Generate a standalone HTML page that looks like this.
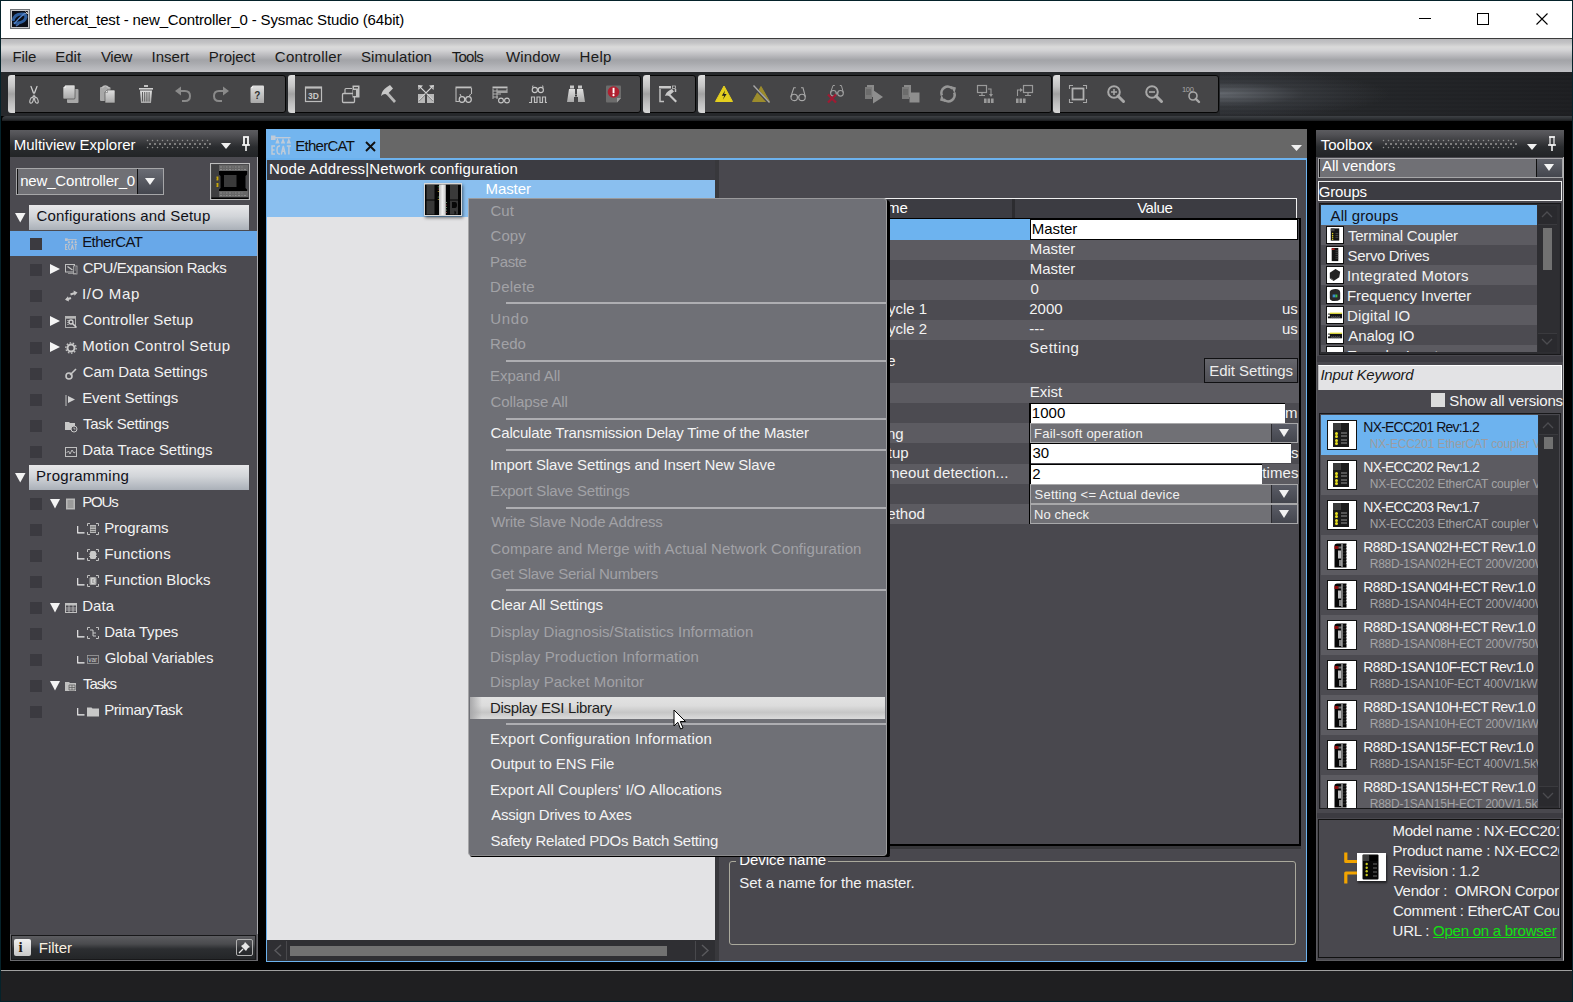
<!DOCTYPE html>
<html><head><meta charset="utf-8">
<style>
*{margin:0;padding:0;box-sizing:border-box}
html,body{width:1573px;height:1002px;overflow:hidden;background:#000;font-family:"Liberation Sans",sans-serif;font-size:15px;color:#f0f0f0;position:relative}
.a{position:absolute}
svg.a{overflow:visible}
.t{position:absolute;white-space:nowrap;line-height:15px}
</style></head><body>
<div class="a" style="left:0px;top:0px;width:1573px;height:1002px;border:1px solid #05222a"></div>
<div class="a" style="left:1px;top:1px;width:1571px;height:37px;background:#fff"></div>
<div class="a" style="left:1px;top:38px;width:1571px;height:1px;background:#3c3c3c"></div>
<svg class="a" style="left:10px;top:9px;" width="20" height="20" viewBox="0 0 20 20"><rect x="0.5" y="0.5" width="19" height="19" fill="#c4c6ca" stroke="#707478"/><rect x="2" y="2" width="16" height="16" fill="#0a0e18"/><path d="M3 12 Q4 5 12 5 Q16 5 16 8 Q15 13 8 14 Q5 14.5 4.5 13" stroke="#2d5d9c" stroke-width="3" fill="none"/><path d="M4 15 Q8 10 15 4" stroke="#5a8ad0" stroke-width="1.2" fill="none"/><path d="M6 17 L9 15" stroke="#4a70b0" stroke-width="1.5"/><path d="M15.5 2.5 L18 5 M18 2.5 L15.5 5" stroke="#e0e0e0" stroke-width="0.9"/></svg>
<div class="t" style="left:34.96px;top:12.10px;color:#000;font-size:15px;letter-spacing:-0.151px;">ethercat_test - new_Controller_0 - Sysmac Studio (64bit)</div>
<div class="a" style="left:1419px;top:18px;width:12px;height:1px;background:#000"></div>
<div class="a" style="left:1477px;top:13px;width:12px;height:12px;border:1px solid #000"></div>
<svg class="a" style="left:1536px;top:13px;" width="12" height="12" viewBox="0 0 12 12"><path d="M0.5 0.5L11.5 11.5M11.5 0.5L0.5 11.5" stroke="#000" stroke-width="1.1"/></svg>
<div class="a" style="left:1px;top:39px;width:1571px;height:33px;background:linear-gradient(#b8b8bb 0px,#c4c4c6 4px,#dadada 8px,#d4d4d6 11px,#bcbcbf 16px,#a3a4a8 21px,#a8a9ad 24px,#b4b5b9 28px,#c0c0c4 33px)"></div>
<div class="t" style="left:12.57px;top:49.10px;color:#1a1a1a;font-size:15px;letter-spacing:-0.158px;">File</div>
<div class="t" style="left:55.27px;top:49.10px;color:#1a1a1a;font-size:15px;letter-spacing:-0.002px;">Edit</div>
<div class="t" style="left:100.93px;top:49.10px;color:#1a1a1a;font-size:15px;letter-spacing:-0.294px;">View</div>
<div class="t" style="left:151.62px;top:49.10px;color:#1a1a1a;font-size:15px;letter-spacing:-0.004px;">Insert</div>
<div class="t" style="left:208.77px;top:49.10px;color:#1a1a1a;font-size:15px;letter-spacing:-0.057px;">Project</div>
<div class="t" style="left:274.84px;top:49.10px;color:#1a1a1a;font-size:15px;letter-spacing:0.221px;">Controller</div>
<div class="t" style="left:360.92px;top:49.10px;color:#1a1a1a;font-size:15px;letter-spacing:0.113px;">Simulation</div>
<div class="t" style="left:451.66px;top:49.10px;color:#1a1a1a;font-size:15px;letter-spacing:-0.700px;">Tools</div>
<div class="t" style="left:505.93px;top:49.10px;color:#1a1a1a;font-size:15px;letter-spacing:0.136px;">Window</div>
<div class="t" style="left:579.47px;top:49.10px;color:#1a1a1a;font-size:15px;letter-spacing:0.370px;">Help</div>
<div class="a" style="left:1px;top:72px;width:1571px;height:44px;background:#26282b"></div>
<div class="a" style="left:1220px;top:72px;width:352px;height:44px;background:repeating-linear-gradient(rgba(0,0,0,0) 0px,rgba(0,0,0,0) 2px,rgba(0,0,0,0.12) 3px,rgba(0,0,0,0) 4px),radial-gradient(ellipse 170px 24px at 0px 22px,rgba(120,125,132,0.75),rgba(80,84,90,0.35) 50%,rgba(0,0,0,0) 100%),linear-gradient(90deg,#2a2c30 0px,#25272a 150px,#1f2023 352px)"></div>
<div class="a" style="left:8px;top:75px;width:278px;height:38px;background:#454547;border:1px solid #060606;border-radius:3px"></div>
<div class="a" style="left:8px;top:75px;width:7px;height:38px;border-radius:3px 0 0 3px;background:linear-gradient(#dedede,#c4c4c4 30%,#a2a2a2 50%,#c0c0c0 75%,#d6d6d6)"></div>
<div class="a" style="left:288px;top:75px;width:353px;height:38px;background:#454547;border:1px solid #060606;border-radius:3px"></div>
<div class="a" style="left:288px;top:75px;width:7px;height:38px;border-radius:3px 0 0 3px;background:linear-gradient(#dedede,#c4c4c4 30%,#a2a2a2 50%,#c0c0c0 75%,#d6d6d6)"></div>
<div class="a" style="left:643px;top:75px;width:53px;height:38px;background:#454547;border:1px solid #060606;border-radius:3px"></div>
<div class="a" style="left:643px;top:75px;width:7px;height:38px;border-radius:3px 0 0 3px;background:linear-gradient(#dedede,#c4c4c4 30%,#a2a2a2 50%,#c0c0c0 75%,#d6d6d6)"></div>
<div class="a" style="left:698px;top:75px;width:354px;height:38px;background:#454547;border:1px solid #060606;border-radius:3px"></div>
<div class="a" style="left:698px;top:75px;width:7px;height:38px;border-radius:3px 0 0 3px;background:linear-gradient(#dedede,#c4c4c4 30%,#a2a2a2 50%,#c0c0c0 75%,#d6d6d6)"></div>
<div class="a" style="left:1053px;top:75px;width:166px;height:38px;background:#454547;border:1px solid #060606;border-radius:3px"></div>
<div class="a" style="left:1053px;top:75px;width:7px;height:38px;border-radius:3px 0 0 3px;background:linear-gradient(#dedede,#c4c4c4 30%,#a2a2a2 50%,#c0c0c0 75%,#d6d6d6)"></div>
<div class="a" style="left:2px;top:116px;width:1570px;height:5px;background:linear-gradient(#3e4145,#2c2f32 60%,#1a1b1d);border-radius:4px 0 0 0"></div>
<svg width="0" height="0" style="position:absolute"><defs><linearGradient id="lg" x1="0" y1="0" x2="0" y2="1"><stop offset="0" stop-color="#e0e0e0"/><stop offset="1" stop-color="#a8a8a8"/></linearGradient></defs></svg>
<svg class="a" style="left:24px;top:84px;" width="20" height="20" viewBox="0 0 20 20"><path d="M6.3 2.2 Q6.9 1.2 7.6 2.2 L11.8 13.2 L10.4 13.6 Z M13.7 2.2 Q13.1 1.2 12.4 2.2 L8.2 13.2 L9.6 13.6 Z" fill="#cfcfcf"/><ellipse cx="7.6" cy="16.3" rx="1.6" ry="3" transform="rotate(18 7.6 16.3)" fill="none" stroke="#c4c4c4" stroke-width="1.1"/><ellipse cx="12.4" cy="16.3" rx="1.6" ry="3" transform="rotate(-18 12.4 16.3)" fill="none" stroke="#c4c4c4" stroke-width="1.1"/></svg>
<svg class="a" style="left:61px;top:84px;" width="20" height="20" viewBox="0 0 20 20"><rect x="6" y="5" width="11.5" height="14" rx="1" fill="#a8a8a8"/><path d="M3 3 L5 1 L13 1 Q14 1 14 2 L14 14 Q14 15 13 15 L3 15 Q2 15 2 14 L2 4 Z" fill="url(#lg)" stroke="#404040" stroke-width="0.6"/><path d="M2 4 L5 4 L5 1" fill="#e8e8e8"/></svg>
<svg class="a" style="left:98px;top:84px;" width="20" height="20" viewBox="0 0 20 20"><rect x="2" y="3" width="10.5" height="14" rx="1" fill="#a8a8a8"/><path d="M4 4 Q7 0 11 4" stroke="#c0c0c0" stroke-width="1.6" fill="none"/><path d="M7 8 L9 6 L16 6 Q17 6 17 7 L17 19 L7 19 Z" fill="url(#lg)" stroke="#404040" stroke-width="0.6"/><path d="M7 8.5 L9.5 8.5 L9.5 6" fill="#e8e8e8" stroke="#606060" stroke-width="0.5"/></svg>
<svg class="a" style="left:136px;top:84px;" width="20" height="20" viewBox="0 0 20 20"><rect x="8" y="1" width="4" height="2" fill="#c0c0c0"/><rect x="3" y="4" width="14" height="1.6" fill="#d0d0d0"/><path d="M4 6.5 L16 6.5 L15 19 L5 19 Z" fill="url(#lg)"/><path d="M6.5 8 V17.5 M8.7 8 V17.5 M10.9 8 V17.5 M13.1 8 V17.5" stroke="#505050" stroke-width="0.9"/></svg>
<svg class="a" style="left:174px;top:84px;" width="20" height="20" viewBox="0 0 20 20"><path d="M6 7 H11 Q16 7 16 12 Q16 17 11 17 H8" stroke="#8a8a8a" stroke-width="2" fill="none"/><path d="M1 7 L7 2.5 L7 11.5 Z" fill="#8a8a8a"/></svg>
<svg class="a" style="left:210px;top:84px;" width="20" height="20" viewBox="0 0 20 20"><path d="M14 7 H9 Q4 7 4 12 Q4 17 9 17 H12" stroke="#8a8a8a" stroke-width="2" fill="none"/><path d="M19 7 L13 2.5 L13 11.5 Z" fill="#8a8a8a"/></svg>
<svg class="a" style="left:248px;top:84px;" width="20" height="20" viewBox="0 0 20 20"><path d="M2.5 4 L5 1.5 L15 1.5 Q16 1.5 16 2.5 L16 18.5 Q16 19 15 19 L3.5 19 Q2.5 19 2.5 18 Z" fill="url(#lg)"/><path d="M2.5 4 L5 4 L5 1.5 Z" fill="#f0f0f0"/><text x="9.3" y="14.5" font-family="Liberation Sans" font-weight="bold" font-size="10" fill="#303030" text-anchor="middle">?</text></svg>
<svg class="a" style="left:304px;top:84px;" width="20" height="20" viewBox="0 0 20 20"><rect x="1.5" y="3" width="16" height="14.5" fill="none" stroke="#bdbdbd" stroke-width="1.2"/><rect x="1.5" y="3" width="16" height="1.6" fill="#bdbdbd"/><text x="9.5" y="14.6" font-family="Liberation Sans" font-weight="bold" font-size="8.5" fill="#c8c8c8" text-anchor="middle">3D</text></svg>
<svg class="a" style="left:341px;top:84px;" width="20" height="20" viewBox="0 0 20 20"><rect x="1.5" y="9.5" width="12" height="9" rx="1" fill="none" stroke="#bdbdbd" stroke-width="1.3"/><path d="M4 9 V5.5 Q4 4.5 5 4.5 H11" stroke="#bdbdbd" stroke-width="1.2" fill="none"/><rect x="11.5" y="1.5" width="7" height="12" fill="#c0c0c0"/><rect x="13" y="3" width="4" height="1.5" fill="#505050"/><rect x="12" y="6" width="3" height="6" fill="#505050"/></svg>
<svg class="a" style="left:378px;top:84px;" width="20" height="20" viewBox="0 0 20 20"><path d="M10 8 L18 17 L16 19 L8 10 Z" fill="#b8b8b8"/><path d="M3 12 Q4 6 9 3 L12 1 L15 4.5 L9 10.5 Q6 9 3 12 Z" fill="#c8c8c8"/></svg>
<svg class="a" style="left:416px;top:84px;" width="20" height="20" viewBox="0 0 20 20"><rect x="2" y="10" width="7" height="9" fill="#b8b8b8"/><rect x="11" y="10" width="7" height="9" fill="#b8b8b8"/><path d="M3 2 L17 16 M17 2 L3 16" stroke="#d0d0d0" stroke-width="1.3"/><path d="M2 1 L7 1.5 L2.5 6 Z M18 1 L13 1.5 L17.5 6 Z" fill="#d0d0d0"/><path d="M3 2 L17 16 M17 2 L3 16" stroke="#454547" stroke-width="0.5" transform="translate(0,1.2)"/></svg>
<svg class="a" style="left:454px;top:84px;" width="20" height="20" viewBox="0 0 20 20"><rect x="1.5" y="2.5" width="16" height="1.8" fill="#c0c0c0"/><path d="M2 4 V17.5 H5" stroke="#b8b8b8" stroke-width="1.1" fill="none"/><path d="M17.5 4 V10" stroke="#b8b8b8" stroke-width="1.1"/><circle cx="8" cy="15.5" r="2.8" fill="none" stroke="#c8c8c8" stroke-width="1.2"/><circle cx="14.5" cy="15.5" r="2.8" fill="none" stroke="#c8c8c8" stroke-width="1.2"/><path d="M6 10 L7 12 M16.5 10 L15.5 12 M10.6 15 Q11.3 14 12 15" stroke="#c8c8c8" stroke-width="1" fill="none"/></svg>
<svg class="a" style="left:491px;top:84px;" width="20" height="20" viewBox="0 0 20 20"><rect x="1.5" y="2.5" width="15" height="1.8" fill="#c0c0c0"/><path d="M2 4.5 V15 M2 7 H16 M2 10 H10 M2 13 H7 M6 4.5 V15 M16 4.5 V9" stroke="#b0b0b0" stroke-width="1" fill="none"/><rect x="6" y="7" width="10" height="2" fill="#a0a0a0"/><circle cx="10" cy="16.5" r="2.4" fill="none" stroke="#c8c8c8" stroke-width="1.1"/><circle cx="16" cy="16.5" r="2.4" fill="none" stroke="#c8c8c8" stroke-width="1.1"/></svg>
<svg class="a" style="left:528px;top:84px;" width="20" height="20" viewBox="0 0 20 20"><circle cx="6.8" cy="6" r="2.6" fill="none" stroke="#c8c8c8" stroke-width="1.1"/><circle cx="12.8" cy="6" r="2.6" fill="none" stroke="#c8c8c8" stroke-width="1.1"/><path d="M5 1.5 L4.5 3.5 M14.6 1.5 L15.1 3.5 M9.2 5.5 Q9.8 4.5 10.4 5.5" stroke="#c8c8c8" stroke-width="1" fill="none"/><path d="M1 18.5 H3.5 V13 H6.5 V18.5 H9 V13 H12 V18.5 H14.5 V13 H17.5 V18.5 H19" stroke="#c0c0c0" stroke-width="1.2" fill="none"/></svg>
<svg class="a" style="left:566px;top:84px;" width="20" height="20" viewBox="0 0 20 20"><rect x="4" y="1.5" width="4" height="3" fill="#c8c8c8"/><rect x="12" y="1.5" width="4" height="3" fill="#c8c8c8"/><path d="M3 5 H9 V10 H11 V5 H17 L19 18 H12 V13 H8 V18 H1 Z" fill="url(#lg)"/><rect x="9" y="10.5" width="2" height="2" fill="#3a3a3a"/></svg>
<svg class="a" style="left:604px;top:84px;" width="20" height="20" viewBox="0 0 20 20"><path d="M2 2.5 Q2 1.5 3 1.5 H16 Q17 1.5 17 2.5 V14 L13 18.5 H3 Q2 18.5 2 17.5 Z" fill="#6c6c6c"/><path d="M17 14 L13 18.5 L13 14 Z" fill="#a0a0a0"/><circle cx="9.5" cy="8" r="5.8" fill="#b02030"/><rect x="8.6" y="3.8" width="1.9" height="5.5" fill="#fff"/><circle cx="9.5" cy="11.2" r="1.1" fill="#fff"/></svg>
<svg class="a" style="left:658px;top:84px;" width="20" height="20" viewBox="0 0 20 20"><rect x="1" y="2" width="12" height="2.5" fill="#c8c8c8"/><rect x="14.5" y="2" width="3" height="2.5" fill="none" stroke="#c0c0c0" stroke-width="0.8"/><path d="M2 5 V17.5 H6 M17.5 5 V8" stroke="#c0c0c0" stroke-width="1.5" fill="none"/><path d="M7 12 Q8 8 12 6 L14 5 L16 7.5 L12.5 10.5 L19 17 L17.5 18.5 L11 12 Q9 11 7 12 Z" fill="#c8c8c8"/></svg>
<svg class="a" style="left:714px;top:84px;" width="20" height="20" viewBox="0 0 20 20"><path d="M10 2 L18.5 17.5 H1.5 Z" fill="#e4cf1e" stroke="#e4cf1e" stroke-width="1" stroke-linejoin="round"/><path d="M11 6.5 L7.8 11.8 H10.3 L8.8 15.8 L12.6 10 H10.2 Z" fill="#202020"/></svg>
<svg class="a" style="left:751px;top:84px;" width="20" height="20" viewBox="0 0 20 20"><path d="M10 2.5 L18.5 17.5 H1.5 Z" fill="#9c8c2c" stroke="#9c8c2c" stroke-width="1" stroke-linejoin="round"/><path d="M2 2 L18 19" stroke="#454547" stroke-width="2.6"/><path d="M2.5 1.5 L18.5 18.5" stroke="#a8a8a8" stroke-width="1.4"/></svg>
<svg class="a" style="left:788px;top:84px;" width="20" height="20" viewBox="0 0 20 20"><circle cx="6.2" cy="13.4" r="3.2" fill="none" stroke="#a8a8a8" stroke-width="1.15"/><circle cx="14" cy="13.4" r="3.2" fill="none" stroke="#a8a8a8" stroke-width="1.15"/><path d="M2.8 12.8 L5.8 3.8 H7.8 M17.4 12.8 L15 3.8 H13 M9.4 13 H10.8" stroke="#a8a8a8" stroke-width="1.1" fill="none"/></svg>
<svg class="a" style="left:826px;top:84px;" width="20" height="20" viewBox="0 0 20 20"><circle cx="7.4" cy="9.3" r="2.8" fill="none" stroke="#a0a0a0" stroke-width="1.1"/><circle cx="14.5" cy="9.3" r="2.8" fill="none" stroke="#a0a0a0" stroke-width="1.1"/><path d="M4.5 8.8 L7 1.5 H8.8 M17.4 8.8 L15.4 1.5 H13.8 M10.2 9 H11.7" stroke="#a0a0a0" stroke-width="1" fill="none"/><path d="M2 10.5 L10 18.5 M10 10.5 L2 18.5" stroke="#a01a32" stroke-width="2.3"/></svg>
<svg class="a" style="left:864px;top:84px;" width="20" height="20" viewBox="0 0 20 20"><rect x="3" y="1" width="7" height="12" fill="#8a8a8a"/><rect x="1" y="3" width="7" height="12" fill="#7a7a7a"/><path d="M2 6 H7 M2 8 H7 M2 10 H7" stroke="#555" stroke-width="0.7"/><path d="M9 6 L19 13 L9 19.5 Z" fill="#8e8e8e"/></svg>
<svg class="a" style="left:901px;top:84px;" width="20" height="20" viewBox="0 0 20 20"><rect x="3" y="1" width="7" height="12" fill="#8a8a8a"/><rect x="1" y="3" width="7" height="12" fill="#7a7a7a"/><path d="M2 6 H7 M2 8 H7 M2 10 H7" stroke="#555" stroke-width="0.7"/><rect x="8.5" y="8.5" width="10" height="10" fill="#8e8e8e"/></svg>
<svg class="a" style="left:938px;top:84px;" width="20" height="20" viewBox="0 0 20 20"><path d="M3.8 11.5 A6.5 6.5 0 0 1 14.5 4.6" stroke="#969696" stroke-width="2.6" fill="none"/><path d="M16.2 8.5 A6.5 6.5 0 0 1 5.5 15.4" stroke="#969696" stroke-width="2.6" fill="none"/><path d="M12.5 2 L18 3.5 L16.5 9 Z M7.5 18 L2 16.5 L3.5 11 Z" fill="#969696"/></svg>
<svg class="a" style="left:976px;top:84px;" width="20" height="20" viewBox="0 0 20 20"><rect x="1.5" y="1.5" width="9" height="7" fill="none" stroke="#9a9a9a" stroke-width="1.2"/><path d="M6 9 V11 M3 11.5 H9" stroke="#9a9a9a" stroke-width="1.2"/><path d="M12 5 H15 V11" stroke="#9a9a9a" stroke-width="1.1" fill="none"/><path d="M13 10 L15 13 L17 10 Z" fill="#9a9a9a"/><rect x="8" y="14.5" width="2.6" height="4.5" fill="#9a9a9a"/><rect x="11.5" y="14.5" width="2.6" height="4.5" fill="#9a9a9a"/><rect x="15" y="14.5" width="2.6" height="4.5" fill="#9a9a9a"/></svg>
<svg class="a" style="left:1014px;top:84px;" width="20" height="20" viewBox="0 0 20 20"><rect x="9.5" y="1.5" width="9" height="7" fill="none" stroke="#9a9a9a" stroke-width="1.2"/><path d="M14 9 V11 M11 11.5 H17" stroke="#9a9a9a" stroke-width="1.2"/><path d="M3.5 12 V6 H7" stroke="#9a9a9a" stroke-width="1.1" fill="none"/><path d="M6 4 L9 6 L6 8 Z" fill="#9a9a9a"/><rect x="2" y="14.5" width="2.6" height="4.5" fill="#9a9a9a"/><rect x="5.5" y="14.5" width="2.6" height="4.5" fill="#9a9a9a"/><rect x="9" y="14.5" width="2.6" height="4.5" fill="#9a9a9a"/></svg>
<svg class="a" style="left:1068px;top:84px;" width="20" height="20" viewBox="0 0 20 20"><path d="M1.5 5 V1.5 H5 M15 1.5 H18.5 V5 M18.5 15 V18.5 H15 M5 18.5 H1.5 V15" stroke="#a8a8a8" stroke-width="1.1" fill="none"/><rect x="4.5" y="4.5" width="11" height="11" fill="none" stroke="#b0b0b0" stroke-width="1.8"/></svg>
<svg class="a" style="left:1106px;top:84px;" width="20" height="20" viewBox="0 0 20 20"><circle cx="8" cy="8" r="5.8" fill="none" stroke="#a8a8a8" stroke-width="2"/><path d="M12 12 L17.5 17.5" stroke="#a8a8a8" stroke-width="3" stroke-linecap="round"/><path d="M5 8 H11 M8 5 V11" stroke="#a8a8a8" stroke-width="1.5"/></svg>
<svg class="a" style="left:1144px;top:84px;" width="20" height="20" viewBox="0 0 20 20"><circle cx="8" cy="8" r="5.8" fill="none" stroke="#a8a8a8" stroke-width="2"/><path d="M12 12 L17.5 17.5" stroke="#a8a8a8" stroke-width="3" stroke-linecap="round"/><path d="M5 8 H11" stroke="#a8a8a8" stroke-width="1.6"/></svg>
<svg class="a" style="left:1181px;top:84px;" width="20" height="20" viewBox="0 0 20 20"><text x="1" y="7.5" font-family="Liberation Sans" font-size="7.5" fill="#a8a8a8" letter-spacing="-0.3">100</text><circle cx="12" cy="12" r="4" fill="none" stroke="#a8a8a8" stroke-width="1.6"/><path d="M14.8 14.8 L18 18" stroke="#a8a8a8" stroke-width="2.4" stroke-linecap="round"/></svg>
<div class="a" style="left:10px;top:130px;width:248px;height:27px;background:linear-gradient(#5c5c60 0px,#505054 5px,#3a3b3e 12px,#2a2c2f 17px,#222426 27px)"></div>
<div class="a" style="left:146px;top:139px;width:65px;height:11px;background-image:radial-gradient(circle at 1.5px 1.5px,#8e8e8e 0.75px,transparent 1.05px),radial-gradient(circle at 4px 5px,#7e7e7e 0.75px,transparent 1.05px);background-size:5px 7px"></div>
<div class="t" style="left:13.77px;top:137.00px;color:#ffffff;font-size:15px;">Multiview Explorer</div>
<svg class="a" style="left:221px;top:143px;" width="11" height="7" viewBox="0 0 11 7"><path d="M0 0 H10 L5 6 Z" fill="#f0f0f0"/></svg>
<svg class="a" style="left:240px;top:136px;" width="12" height="16" viewBox="0 0 12 16"><path d="M3 1 H9 M4 1 V9 M8 1 V9 M2 9 H10 M6 9 V15" stroke="#f4f4f4" stroke-width="1.6" fill="none"/><rect x="4" y="1" width="4" height="8" fill="none" stroke="#f4f4f4" stroke-width="1.2"/></svg>
<div class="a" style="left:10px;top:157px;width:248px;height:804px;background:#4b4a50;border-right:1px solid #a8a8ac"></div>
<div class="a" style="left:16px;top:168px;width:148px;height:27px;background:#707075;border:1px solid #a6a6a8"></div>
<div class="a" style="left:17px;top:169px;width:1px;height:25px;background:#111"></div>
<div class="a" style="left:137px;top:169px;width:26px;height:25px;background:linear-gradient(#6a6c74,#44464e);border-left:1px solid #101010"></div>
<svg class="a" style="left:145px;top:178px;" width="10" height="7" viewBox="0 0 10 7"><path d="M0 0 H10 L5 7 Z" fill="#f4f4f4"/></svg>
<div class="t" style="left:20.20px;top:173.30px;color:#ffffff;font-size:15px;letter-spacing:-0.172px;">new_Controller_0</div>
<svg class="a" style="left:210px;top:163px;" width="40" height="37" viewBox="0 0 40 37"><rect x="0.5" y="0.5" width="39" height="36" fill="#4a4a4c" stroke="#bdbdbd" stroke-width="1"/><rect x="1.5" y="1.5" width="8" height="34" fill="#3e3e40"/><rect x="9" y="2" width="29" height="6" fill="#666"/><rect x="9" y="28" width="29" height="6" fill="#666"/><path d="M10 4 h2 M13.5 4 h1 M16 4 h1.5 M19 4 h2 M22.5 4 h1 M25 4 h1.5 M28 4 h2 M31.5 4 h1 M10 6.5 h2 M13.5 6.5 h1 M16 6.5 h1.5 M19 6.5 h2 M22.5 6.5 h1 M25 6.5 h1.5 M28 6.5 h2 M31.5 6.5 h1 M34 6.5 h2" stroke="#8a8a8a" stroke-width="1"/><path d="M10 30 h2 M13.5 30 h1 M16 30 h1.5 M19 30 h2 M22.5 30 h1 M25 30 h1.5 M28 30 h2 M31.5 30 h1 M10 32.5 h2 M13.5 32.5 h1 M16 32.5 h1.5 M19 32.5 h2 M22.5 32.5 h1 M25 32.5 h1.5 M28 32.5 h2 M31.5 32.5 h1 M34 32.5 h2" stroke="#8a8a8a" stroke-width="1"/><path d="M9 8 H37 V11.5 L35.5 13 V25 L37 26.5 V28 H9 V26.5 L10.5 25 V13 L9 11.5 Z" fill="#000"/><rect x="14" y="12" width="12.5" height="12" fill="#3a3a3a"/><rect x="1.5" y="34.5" width="37" height="1.5" fill="#000"/><path d="M6 15.5 L8.5 13.5 V18 Z M6 22 L8.5 20 V24.5 Z" fill="#111"/><rect x="6.5" y="13.5" width="2" height="4" fill="#c8a810"/><rect x="6.5" y="20" width="2" height="4" fill="#c8a810"/></svg>
<div class="a" style="left:29px;top:205px;width:220px;height:25px;background:linear-gradient(#e7e7e9,#d2d5d9 45%,#aab0b8)"></div>
<svg class="a" style="left:15px;top:212.5px;" width="10.5" height="9.5" viewBox="0 0 10.5 9.5"><path d="M0 0 H10.5 L5.25 9.5 Z" fill="#f4f4f4"/></svg>
<div class="t" style="left:36.54px;top:207.90px;color:#101018;font-size:15px;letter-spacing:0.192px;">Configurations and Setup</div>
<div class="a" style="left:10px;top:231px;width:247px;height:25px;background:#68a8e9"></div>
<div class="a" style="left:30px;top:237.5px;width:12px;height:12.0px;background:#3b3a40"></div>
<svg class="a" style="left:65px;top:238px;" width="13" height="13" viewBox="0 0 13 13"><g transform="scale(0.6)"><g fill="#c0c4cc"><rect x="0" y="0.5" width="4.5" height="4.5"/><rect x="4" y="2" width="15.5" height="1.4"/><path d="M4.3 8.6 L6.5 3 L8.7 8.6 Z M9.8 8.6 L12 3 L14.2 8.6 Z M15.6 8.6 L17.8 3 L20 8.6 Z"/></g><path d="M4 11 H1 V19 H4 M1 15 H3.5 M9 11 Q6 10.5 6 15 Q6 19.5 9 19 M10.3 19.5 L12.3 11 L14.3 19.5 M11 16.3 H13.6 M15.8 11 H20 M17.9 11 V19.5" stroke="#c0c4cc" stroke-width="1.7" fill="none"/></g></svg>
<div class="t" style="left:82.17px;top:233.90px;color:#101018;font-size:15px;letter-spacing:-0.554px;">EtherCAT</div>
<div class="a" style="left:30px;top:263.5px;width:12px;height:12.0px;background:#3b3a40"></div>
<svg class="a" style="left:50px;top:264px;" width="10" height="10" viewBox="0 0 10 10"><path d="M0 0 L10 5.0 L0 10 Z" fill="#f4f4f4"/></svg>
<svg class="a" style="left:65px;top:264px;" width="13" height="13" viewBox="0 0 13 13"><rect x="0.5" y="0.5" width="9" height="7.5" fill="none" stroke="#c0c0c0" stroke-width="1"/><path d="M2.5 2.5 L7.5 6" stroke="#c8c8c8" stroke-width="1.2"/><rect x="8.5" y="2" width="3.5" height="8" fill="#4b4a50" stroke="#b0b0b0" stroke-width="0.8"/><path d="M9.5 4 H11 M9.5 6 H11 M3 9.5 H11" stroke="#b0b0b0" stroke-width="0.7"/></svg>
<div class="t" style="left:82.64px;top:259.90px;color:#f2f2f2;font-size:15px;letter-spacing:-0.429px;">CPU/Expansion Racks</div>
<div class="a" style="left:30px;top:289.5px;width:12px;height:12.0px;background:#3b3a40"></div>
<svg class="a" style="left:65px;top:290px;" width="13" height="13" viewBox="0 0 13 13"><path d="M5.5 4.5 L10 3 M1.5 9.5 L6 8" stroke="#c8c8c8" stroke-width="2.2" fill="none"/><path d="M8.5 0.5 L12.5 2.5 L9.5 5.8 Z M3 6.2 L0 9.8 L4 11.5 Z" fill="#c8c8c8"/></svg>
<div class="t" style="left:82.02px;top:285.90px;color:#f2f2f2;font-size:15px;letter-spacing:0.661px;">I/O Map</div>
<div class="a" style="left:30px;top:315.5px;width:12px;height:12.0px;background:#3b3a40"></div>
<svg class="a" style="left:50px;top:316px;" width="10" height="10" viewBox="0 0 10 10"><path d="M0 0 L10 5.0 L0 10 Z" fill="#f4f4f4"/></svg>
<svg class="a" style="left:65px;top:316px;" width="13" height="13" viewBox="0 0 13 13"><rect x="0.5" y="0.5" width="10" height="11" fill="none" stroke="#b8b8b8" stroke-width="0.9"/><rect x="0.5" y="0.5" width="10" height="2.2" fill="#b8b8b8"/><path d="M2 4.5 H5 M2 6.5 H4 M2 8.5 H4" stroke="#a8a8a8" stroke-width="0.8"/><circle cx="6" cy="6" r="2" fill="none" stroke="#d0d0d0" stroke-width="1.3"/><path d="M7.5 7.5 L11.5 11.5" stroke="#d0d0d0" stroke-width="1.6"/></svg>
<div class="t" style="left:82.64px;top:311.90px;color:#f2f2f2;font-size:15px;letter-spacing:0.133px;">Controller Setup</div>
<div class="a" style="left:30px;top:341.5px;width:12px;height:12.0px;background:#3b3a40"></div>
<svg class="a" style="left:50px;top:342px;" width="10" height="10" viewBox="0 0 10 10"><path d="M0 0 L10 5.0 L0 10 Z" fill="#f4f4f4"/></svg>
<svg class="a" style="left:65px;top:342px;" width="13" height="13" viewBox="0 0 13 13"><circle cx="6" cy="6" r="3.5" fill="none" stroke="#c8c8c8" stroke-width="2"/><circle cx="6" cy="6" r="5.2" fill="none" stroke="#c8c8c8" stroke-width="1.2" stroke-dasharray="1.6 1.6"/></svg>
<div class="t" style="left:82.17px;top:337.90px;color:#f2f2f2;font-size:15px;letter-spacing:0.366px;">Motion Control Setup</div>
<div class="a" style="left:30px;top:367.5px;width:12px;height:12.0px;background:#3b3a40"></div>
<svg class="a" style="left:65px;top:368px;" width="13" height="13" viewBox="0 0 13 13"><circle cx="4" cy="8" r="3" fill="none" stroke="#c8c8c8" stroke-width="1.6"/><path d="M5 7 L11 1" stroke="#c8c8c8" stroke-width="1.6"/></svg>
<div class="t" style="left:82.64px;top:363.90px;color:#f2f2f2;font-size:15px;letter-spacing:-0.062px;">Cam Data Settings</div>
<div class="a" style="left:30px;top:393.5px;width:12px;height:12.0px;background:#3b3a40"></div>
<svg class="a" style="left:65px;top:394px;" width="13" height="13" viewBox="0 0 13 13"><path d="M1 1 V12" stroke="#c0c0c0" stroke-width="1"/><path d="M3 2 L10 5.5 L3 9 Z" fill="#d0d0d0"/></svg>
<div class="t" style="left:82.17px;top:389.90px;color:#f2f2f2;font-size:15px;letter-spacing:-0.042px;">Event Settings</div>
<div class="a" style="left:30px;top:419.5px;width:12px;height:12.0px;background:#3b3a40"></div>
<svg class="a" style="left:65px;top:420px;" width="13" height="13" viewBox="0 0 13 13"><path d="M0 2 H4 L5 3 H10 V10 H0 Z" fill="#c8c8c8"/><circle cx="9" cy="9" r="3" fill="#4b4a50" stroke="#c8c8c8" stroke-width="1"/><path d="M9 7.5 V9 H10.5" stroke="#c8c8c8" stroke-width="0.8" fill="none"/></svg>
<div class="t" style="left:83.06px;top:415.90px;color:#f2f2f2;font-size:15px;letter-spacing:-0.274px;">Task Settings</div>
<div class="a" style="left:30px;top:445.5px;width:12px;height:12.0px;background:#3b3a40"></div>
<svg class="a" style="left:65px;top:446px;" width="13" height="13" viewBox="0 0 13 13"><rect x="0.5" y="1.5" width="11" height="9" fill="none" stroke="#c0c0c0"/><path d="M1.5 7 L3.5 5 L5 8 L7 4 L9 7 L10.5 6" stroke="#c8c8c8" stroke-width="0.9" fill="none"/></svg>
<div class="t" style="left:82.17px;top:441.90px;color:#f2f2f2;font-size:15px;letter-spacing:-0.072px;">Data Trace Settings</div>
<div class="a" style="left:29px;top:465px;width:220px;height:25px;background:linear-gradient(#e7e7e9,#d2d5d9 45%,#aab0b8)"></div>
<svg class="a" style="left:15px;top:472.5px;" width="10.5" height="9.5" viewBox="0 0 10.5 9.5"><path d="M0 0 H10.5 L5.25 9.5 Z" fill="#f4f4f4"/></svg>
<div class="t" style="left:36.07px;top:467.90px;color:#101018;font-size:15px;letter-spacing:0.287px;">Programming</div>
<div class="a" style="left:30px;top:497.5px;width:12px;height:12.0px;background:#3b3a40"></div>
<svg class="a" style="left:50px;top:499px;" width="10" height="9.5" viewBox="0 0 10 9.5"><path d="M0 0 H10 L5.0 9.5 Z" fill="#f4f4f4"/></svg>
<svg class="a" style="left:65px;top:498px;" width="13" height="13" viewBox="0 0 13 13"><rect x="1" y="0.5" width="9" height="11" fill="#b8b8b8"/><path d="M2.5 3 H8.5 M2.5 5 H8.5 M2.5 7 H8.5 M2.5 9 H8.5" stroke="#707070" stroke-width="0.8"/></svg>
<div class="t" style="left:82.17px;top:493.90px;color:#f2f2f2;font-size:15px;letter-spacing:-1.177px;">POUs</div>
<div class="a" style="left:30px;top:523.5px;width:12px;height:12.0px;background:#3b3a40"></div>
<svg class="a" style="left:77px;top:526px;" width="8" height="8" viewBox="0 0 8 8"><path d="M0.7 0 V6.9 H7.5" stroke="#f4f4f4" stroke-width="1.1" fill="none"/></svg>
<svg class="a" style="left:87px;top:523px;" width="12" height="12" viewBox="0 0 12 12"><path d="M0.5 3 V0.5 H3 M9 0.5 H11.5 V3 M11.5 9 V11.5 H9 M3 11.5 H0.5 V9" stroke="#c0c0c0" fill="none"/><rect x="3" y="2" width="6" height="8" fill="#b8b8b8"/><path d="M3.5 4 H8.5 M3.5 6.5 H8.5 M3.5 8.5 H8.5" stroke="#5a5a5a" stroke-width="0.8"/></svg>
<div class="t" style="left:104.17px;top:519.90px;color:#f2f2f2;font-size:15px;letter-spacing:-0.092px;">Programs</div>
<div class="a" style="left:30px;top:549.5px;width:12px;height:12.0px;background:#3b3a40"></div>
<svg class="a" style="left:77px;top:552px;" width="8" height="8" viewBox="0 0 8 8"><path d="M0.7 0 V6.9 H7.5" stroke="#f4f4f4" stroke-width="1.1" fill="none"/></svg>
<svg class="a" style="left:87px;top:549px;" width="12" height="12" viewBox="0 0 12 12"><path d="M0.5 3 V0.5 H3 M9 0.5 H11.5 V3 M11.5 9 V11.5 H9 M3 11.5 H0.5 V9" stroke="#c0c0c0" fill="none"/><rect x="3" y="2" width="6" height="8" rx="1.5" fill="#c8c8c8"/><path d="M2 5 H10 M2 7.5 H10" stroke="#c8c8c8" stroke-width="0.9"/></svg>
<div class="t" style="left:104.17px;top:545.90px;color:#f2f2f2;font-size:15px;letter-spacing:0.180px;">Functions</div>
<div class="a" style="left:30px;top:575.5px;width:12px;height:12.0px;background:#3b3a40"></div>
<svg class="a" style="left:77px;top:578px;" width="8" height="8" viewBox="0 0 8 8"><path d="M0.7 0 V6.9 H7.5" stroke="#f4f4f4" stroke-width="1.1" fill="none"/></svg>
<svg class="a" style="left:87px;top:575px;" width="12" height="12" viewBox="0 0 12 12"><path d="M0.5 3 V0.5 H3 M9 0.5 H11.5 V3 M11.5 9 V11.5 H9 M3 11.5 H0.5 V9" stroke="#c0c0c0" fill="none"/><rect x="2.5" y="2" width="7" height="8" rx="1.5" fill="#a8a8a8"/><path d="M4.5 3.5 H6.5 Q8 3.5 8 5 Q8 6 6.5 6 Q8 6 8 7.2 Q8 8.5 6.5 8.5 H4.5 Z" fill="none" stroke="#e0e0e0" stroke-width="0.8"/></svg>
<div class="t" style="left:104.17px;top:571.90px;color:#f2f2f2;font-size:15px;letter-spacing:0.042px;">Function Blocks</div>
<div class="a" style="left:30px;top:601.5px;width:12px;height:12.0px;background:#3b3a40"></div>
<svg class="a" style="left:50px;top:603px;" width="10" height="9.5" viewBox="0 0 10 9.5"><path d="M0 0 H10 L5.0 9.5 Z" fill="#f4f4f4"/></svg>
<svg class="a" style="left:65px;top:602px;" width="13" height="13" viewBox="0 0 13 13"><rect x="0.5" y="1.5" width="11" height="9" fill="none" stroke="#c0c0c0"/><rect x="0.5" y="1.5" width="11" height="2" fill="#c0c0c0"/><path d="M4 3 V10 M8 3 V10 M1 6 H11 M1 8 H11" stroke="#c0c0c0" stroke-width="0.8"/></svg>
<div class="t" style="left:82.17px;top:597.90px;color:#f2f2f2;font-size:15px;letter-spacing:0.082px;">Data</div>
<div class="a" style="left:30px;top:627.5px;width:12px;height:12.0px;background:#3b3a40"></div>
<svg class="a" style="left:77px;top:630px;" width="8" height="8" viewBox="0 0 8 8"><path d="M0.7 0 V6.9 H7.5" stroke="#f4f4f4" stroke-width="1.1" fill="none"/></svg>
<svg class="a" style="left:87px;top:627px;" width="12" height="12" viewBox="0 0 12 12"><path d="M0.5 3 V0.5 H3 M9 0.5 H11.5 V3 M11.5 9 V11.5 H9 M3 11.5 H0.5 V9" stroke="#c0c0c0" fill="none"/><path d="M3 3 H6 V9 H9 M6 6 H9" stroke="#c8c8c8" fill="none"/></svg>
<div class="t" style="left:104.17px;top:623.90px;color:#f2f2f2;font-size:15px;letter-spacing:-0.159px;">Data Types</div>
<div class="a" style="left:30px;top:653.5px;width:12px;height:12.0px;background:#3b3a40"></div>
<svg class="a" style="left:77px;top:656px;" width="8" height="8" viewBox="0 0 8 8"><path d="M0.7 0 V6.9 H7.5" stroke="#f4f4f4" stroke-width="1.1" fill="none"/></svg>
<svg class="a" style="left:87px;top:653px;" width="12" height="12" viewBox="0 0 12 12"><rect x="0.5" y="2.5" width="11" height="8" fill="none" stroke="#a0a0a0" stroke-width="0.8"/><text x="1.2" y="9" font-family="Liberation Sans" font-size="6.5" fill="#c8c8c8">var</text></svg>
<div class="t" style="left:104.65px;top:649.90px;color:#f2f2f2;font-size:15px;letter-spacing:-0.011px;">Global Variables</div>
<div class="a" style="left:30px;top:679.5px;width:12px;height:12.0px;background:#3b3a40"></div>
<svg class="a" style="left:50px;top:681px;" width="10" height="9.5" viewBox="0 0 10 9.5"><path d="M0 0 H10 L5.0 9.5 Z" fill="#f4f4f4"/></svg>
<svg class="a" style="left:65px;top:680px;" width="13" height="13" viewBox="0 0 13 13"><path d="M0 2 H4 L5 3 H11 V11 H0 Z" fill="#c0c0c0"/><path d="M4 5 H10 V10 H4 Z M7 5 V10 M4 7.5 H10" stroke="#555" stroke-width="0.7" fill="none"/></svg>
<div class="t" style="left:83.06px;top:675.90px;color:#f2f2f2;font-size:15px;letter-spacing:-1.106px;">Tasks</div>
<div class="a" style="left:30px;top:705.5px;width:12px;height:12.0px;background:#3b3a40"></div>
<svg class="a" style="left:77px;top:708px;" width="8" height="8" viewBox="0 0 8 8"><path d="M0.7 0 V6.9 H7.5" stroke="#f4f4f4" stroke-width="1.1" fill="none"/></svg>
<svg class="a" style="left:87px;top:705px;" width="12" height="12" viewBox="0 0 12 12"><path d="M0 2.5 H4.5 L5.5 3.5 H12 V11.5 H0 Z" fill="#c8c8c8"/></svg>
<div class="t" style="left:104.17px;top:701.90px;color:#f2f2f2;font-size:15px;letter-spacing:-0.396px;">PrimaryTask</div>
<div class="a" style="left:10px;top:934px;width:248px;height:27px;border:1px solid #6a6a6e;border-top:none"></div>
<div class="a" style="left:11px;top:935px;width:245px;height:25px;background:linear-gradient(#5c5c60 0px,#4a4b4e 8px,#2c2e31 13px,#222426 25px);border:1px solid #18181a"></div>
<div class="a" style="left:14px;top:939px;width:17px;height:17px;background:linear-gradient(#f0f0f0,#c8c8c8);border-radius:2px"></div>
<div class="t" style="left:18.50px;top:939.80px;color:#2a1a10;font-size:15px;font-weight:bold;font-family:Liberation Serif,serif">i</div>
<div class="t" style="left:38.77px;top:940.30px;color:#f8f0e0;font-size:15px;">Filter</div>
<div class="a" style="left:236px;top:939px;width:17px;height:17px;border:1px solid #b0b0b0;border-radius:2px"></div>
<svg class="a" style="left:238px;top:941px;" width="13" height="13" viewBox="0 0 13 13"><path d="M7 1 L12 6 L10 7 L8 10 L3 5 L6 3 Z" fill="#e8e8e8"/><path d="M5 8 L1 12" stroke="#e8e8e8" stroke-width="1.2"/></svg>
<div class="a" style="left:266px;top:129px;width:1041px;height:29px;background:#676767"></div>
<div class="a" style="left:266px;top:129px;width:114px;height:29px;background:#73b5ef"></div>
<div class="a" style="left:266px;top:158px;width:1041px;height:2px;background:#6cb2ee"></div>
<svg class="a" style="left:271px;top:135px;" width="20" height="20" viewBox="0 0 20 20"><g opacity="0.85"><g fill="#cdd0d6"><rect x="0" y="0.5" width="4.5" height="4.5"/><rect x="4" y="2" width="15.5" height="1.4"/><path d="M4.3 8.6 L6.5 3 L8.7 8.6 Z M9.8 8.6 L12 3 L14.2 8.6 Z M15.6 8.6 L17.8 3 L20 8.6 Z"/></g><path d="M4 11 H1 V19 H4 M1 15 H3.5 M9 11 Q6 10.5 6 15 Q6 19.5 9 19 M10.3 19.5 L12.3 11 L14.3 19.5 M11 16.3 H13.6 M15.8 11 H20 M17.9 11 V19.5" stroke="#cdd0d6" stroke-width="1.45" fill="none"/></g></svg>
<div class="t" style="left:295.37px;top:138.30px;color:#101010;font-size:15px;letter-spacing:-0.754px;">EtherCAT</div>
<svg class="a" style="left:365px;top:141px;" width="11" height="11" viewBox="0 0 11 11"><path d="M1 1 L10 10 M10 1 L1 10" stroke="#111" stroke-width="1.9"/></svg>
<svg class="a" style="left:1291px;top:145px;" width="11" height="6" viewBox="0 0 11 6"><path d="M0 0 H11 L5.5 6 Z" fill="#f0f0f0"/></svg>
<div class="a" style="left:266px;top:160px;width:1px;height:802px;background:#6cb2ee"></div>
<div class="a" style="left:1306px;top:160px;width:1px;height:802px;background:#6cb2ee"></div>
<div class="a" style="left:266px;top:961px;width:1041px;height:1px;background:#6cb2ee"></div>
<div class="a" style="left:267px;top:160px;width:448px;height:20px;background:#3c3c42"></div>
<div class="t" style="left:268.97px;top:161.10px;color:#ffffff;font-size:15px;letter-spacing:0.172px;">Node Address|Network configuration</div>
<div class="a" style="left:267px;top:180px;width:448px;height:37px;background:#8abfef"></div>
<div class="a" style="left:267px;top:217px;width:448px;height:723px;background:#e3e3e5"></div>
<div class="a" style="left:424px;top:183px;width:38px;height:33px;background:#d8d8d8;box-shadow:1px 2px 3px rgba(0,0,0,0.5)"></div>
<svg class="a" style="left:424px;top:183px;" width="38" height="33" viewBox="0 0 38 33"><defs><linearGradient id="ws" x1="0" x2="1"><stop offset="0" stop-color="#b8b8b8"/><stop offset="0.5" stop-color="#f0f0f0"/><stop offset="1" stop-color="#c8c8c8"/></linearGradient></defs><rect x="1" y="1.5" width="36" height="30.5" fill="#050505"/><rect x="2.5" y="2" width="8" height="14.5" fill="#3a3a3a"/><rect x="2.5" y="17.5" width="8" height="14" fill="#383838"/><rect x="15" y="1.5" width="6.8" height="30.5" fill="url(#ws)"/><rect x="26" y="2" width="8" height="14.5" fill="#3a3a3a"/><rect x="26" y="17.5" width="8" height="14" fill="#383838"/><path d="M28 19 H31 Q33 19 33 22 Q33 25 31 25 H28 Z M30.5 27.5 A2.5 2.5 0 0 1 30.5 32" fill="#080808"/><circle cx="14.3" cy="3.8" r="0.6" fill="#5a9a5a"/><circle cx="14.3" cy="6" r="0.6" fill="#a05050"/><circle cx="14.3" cy="8.5" r="0.6" fill="#c0a030"/><circle cx="14.3" cy="14" r="0.6" fill="#5a9a5a"/><circle cx="14.3" cy="16.5" r="0.6" fill="#c0a030"/><circle cx="22.5" cy="19.5" r="0.6" fill="#7aa07a"/><circle cx="22.5" cy="22" r="0.6" fill="#a05050"/><circle cx="22.5" cy="24.5" r="0.6" fill="#7aa07a"/><circle cx="22.5" cy="27" r="0.6" fill="#7aa07a"/><circle cx="22.5" cy="29.5" r="0.6" fill="#a05050"/></svg>
<div class="t" style="left:485.47px;top:181.10px;color:#ffffff;font-size:15px;letter-spacing:-0.073px;">Master</div>
<div class="a" style="left:267px;top:940px;width:448px;height:21px;background:#2f2f33"></div>
<div class="a" style="left:268px;top:941px;width:19px;height:19px;background:#2f2f33;border-right:1px solid #48484c"></div>
<div class="a" style="left:695px;top:941px;width:19px;height:19px;background:#2f2f33;border-left:1px solid #48484c"></div>
<div class="a" style="left:290px;top:946px;width:377px;height:10px;background:#717171"></div>
<svg class="a" style="left:273px;top:944px;" width="10" height="13" viewBox="0 0 10 13"><path d="M8 1 L2 6.5 L8 12" stroke="#5a5a5e" stroke-width="1.4" fill="none"/></svg>
<svg class="a" style="left:700px;top:944px;" width="10" height="13" viewBox="0 0 10 13"><path d="M2 1 L8 6.5 L2 12" stroke="#5a5a5e" stroke-width="1.4" fill="none"/></svg>
<div class="a" style="left:715px;top:160px;width:4px;height:801px;background:#38383c"></div>
<div class="a" style="left:719px;top:160px;width:587px;height:801px;background:#49484e"></div>
<div class="a" style="left:720px;top:198px;width:577px;height:1px;background:#f0f0f0"></div>
<div class="a" style="left:1296px;top:198px;width:1px;height:20px;background:#f0f0f0"></div>
<div class="a" style="left:720px;top:199px;width:576px;height:19px;background:#3c3c42"></div>
<div class="a" style="left:1012px;top:199px;width:3px;height:19px;background:#2c2c30"></div>
<div class="t" style="left:887.00px;top:200.20px;color:#ffffff;font-size:15px;">me</div>
<div class="t" style="left:1137.13px;top:200.20px;color:#ffffff;font-size:15px;letter-spacing:-0.408px;">Value</div>
<div class="a" style="left:720px;top:218px;width:580px;height:1.5px;background:#000"></div>
<div class="a" style="left:720px;top:219px;width:579px;height:626px;background:#49484e"></div>
<div class="a" style="left:1299px;top:218px;width:2px;height:627px;background:#000"></div>
<div class="a" style="left:720px;top:844px;width:581px;height:2px;background:#000"></div>
<div class="a" style="left:720px;top:846px;width:581px;height:3px;background:#37373a"></div>
<div class="a" style="left:888px;top:219px;width:142px;height:21px;background:#6db3ef"></div>
<div class="a" style="left:888px;top:240px;width:411px;height:20px;background:#5c5b61"></div>
<div class="a" style="left:888px;top:260px;width:411px;height:20px;background:#4c4b51"></div>
<div class="a" style="left:888px;top:280px;width:411px;height:20px;background:#5c5b61"></div>
<div class="a" style="left:888px;top:300px;width:411px;height:20px;background:#4c4b51"></div>
<div class="a" style="left:888px;top:320px;width:411px;height:20px;background:#5c5b61"></div>
<div class="a" style="left:888px;top:340px;width:411px;height:43px;background:#4c4b51"></div>
<div class="a" style="left:888px;top:383px;width:411px;height:20px;background:#5c5b61"></div>
<div class="a" style="left:888px;top:403px;width:411px;height:20px;background:#4c4b51"></div>
<div class="a" style="left:888px;top:423px;width:411px;height:20px;background:#5c5b61"></div>
<div class="a" style="left:888px;top:443px;width:411px;height:21px;background:#4c4b51"></div>
<div class="a" style="left:888px;top:464px;width:411px;height:20px;background:#5c5b61"></div>
<div class="a" style="left:888px;top:484px;width:411px;height:20px;background:#4c4b51"></div>
<div class="a" style="left:888px;top:504px;width:411px;height:20px;background:#5c5b61"></div>
<div class="a" style="left:1030px;top:219px;width:268px;height:21px;background:#fff;border:1px solid #000;border-right:1px solid #000"></div>
<div class="t" style="left:1031.77px;top:220.80px;color:#000;font-size:15px;letter-spacing:-0.073px;">Master</div>
<div class="t" style="left:1029.77px;top:241.30px;color:#f2f2f2;font-size:15px;letter-spacing:-0.073px;">Master</div>
<div class="t" style="left:1029.77px;top:261.30px;color:#f2f2f2;font-size:15px;letter-spacing:-0.073px;">Master</div>
<div class="t" style="left:1030.41px;top:281.30px;color:#f2f2f2;font-size:15px;">0</div>
<div class="t" style="left:887.96px;top:301.00px;color:#f2f2f2;font-size:15px;">ycle 1</div>
<div class="t" style="left:1029.25px;top:301.00px;color:#f2f2f2;font-size:15px;">2000</div>
<div class="t" style="left:1282.03px;top:301.00px;color:#f2f2f2;font-size:15px;">us</div>
<div class="t" style="left:887.96px;top:321.00px;color:#f2f2f2;font-size:15px;">ycle 2</div>
<div class="t" style="left:1029.33px;top:321.00px;color:#f2f2f2;font-size:15px;">---</div>
<div class="t" style="left:1282.03px;top:321.00px;color:#f2f2f2;font-size:15px;">us</div>
<div class="t" style="left:1029.32px;top:340.30px;color:#f2f2f2;font-size:15px;letter-spacing:0.491px;">Setting</div>
<div class="t" style="left:887.36px;top:353.30px;color:#f2f2f2;font-size:15px;clip-path:inset(0 0 0 2px)">e</div>
<div class="a" style="left:1204px;top:358px;width:94px;height:25px;background:linear-gradient(#66666c,#4e4e54);border:1px solid #101012"></div>
<div class="t" style="left:1209.27px;top:363.30px;color:#ececec;font-size:15px;letter-spacing:-0.037px;">Edit Settings</div>
<div class="t" style="left:1029.77px;top:384.30px;color:#f2f2f2;font-size:15px;">Exist</div>
<div class="a" style="left:1029px;top:403px;width:2px;height:121px;background:#000"></div>
<div class="a" style="left:1030px;top:403px;width:255px;height:20px;background:#fff;border-left:1px solid #000;border-top:1px solid #000"></div>
<div class="t" style="left:1031.86px;top:405.30px;color:#000;font-size:15px;">1000</div>
<div class="t" style="left:1285.00px;top:404.80px;color:#f2f2f2;font-size:15px;">m</div>
<div class="a" style="left:1030px;top:423px;width:268px;height:20px;background:#707075;border:1px solid #a8a8aa"></div>
<div class="a" style="left:1271px;top:424px;width:26px;height:18px;background:linear-gradient(#5a5c66,#44464e);border-left:1px solid #2a2a2e"></div>
<svg class="a" style="left:1279px;top:429px;" width="10" height="8" viewBox="0 0 10 8"><path d="M0 0 H10 L5 8 Z" fill="#f2f2f2"/></svg>
<div class="t" style="left:1034.03px;top:426.00px;color:#f2f2f2;font-size:13px;letter-spacing:0.253px;">Fail-soft operation</div>
<div class="t" style="left:887.00px;top:425.70px;color:#f2f2f2;font-size:15px;">ng</div>
<div class="a" style="left:1030px;top:443px;width:261px;height:20px;background:#fff;border-left:1px solid #000;border-top:1px solid #000"></div>
<div class="t" style="left:1032.43px;top:445.30px;color:#000;font-size:15px;">30</div>
<div class="t" style="left:1291.08px;top:445.30px;color:#f2f2f2;font-size:15px;">s</div>
<div class="t" style="left:887.77px;top:444.80px;color:#f2f2f2;font-size:15px;">tup</div>
<div class="a" style="left:1030px;top:464px;width:232px;height:20px;background:#fff;border-left:1px solid #000;border-top:1px solid #000"></div>
<div class="t" style="left:1032.25px;top:466.30px;color:#000;font-size:15px;">2</div>
<div class="t" style="left:1262.27px;top:465.30px;color:#f2f2f2;font-size:15px;letter-spacing:0.108px;">times</div>
<div class="t" style="left:887.00px;top:464.70px;color:#f2f2f2;font-size:15px;letter-spacing:0.125px;">meout detection...</div>
<div class="a" style="left:1030px;top:484px;width:268px;height:20px;background:#707075;border:1px solid #a8a8aa"></div>
<div class="a" style="left:1271px;top:485px;width:26px;height:18px;background:linear-gradient(#5a5c66,#44464e);border-left:1px solid #2a2a2e"></div>
<svg class="a" style="left:1279px;top:490px;" width="10" height="8" viewBox="0 0 10 8"><path d="M0 0 H10 L5 8 Z" fill="#f2f2f2"/></svg>
<div class="t" style="left:1034.51px;top:487.00px;color:#f2f2f2;font-size:13px;letter-spacing:0.246px;">Setting &lt;= Actual device</div>
<div class="a" style="left:1030px;top:504px;width:268px;height:20px;background:#707075;border:1px solid #a8a8aa"></div>
<div class="a" style="left:1271px;top:505px;width:26px;height:18px;background:linear-gradient(#5a5c66,#44464e);border-left:1px solid #2a2a2e"></div>
<svg class="a" style="left:1279px;top:510px;" width="10" height="8" viewBox="0 0 10 8"><path d="M0 0 H10 L5 8 Z" fill="#f2f2f2"/></svg>
<div class="t" style="left:1034.03px;top:507.00px;color:#f2f2f2;font-size:13px;letter-spacing:0.122px;">No check</div>
<div class="t" style="left:887.36px;top:505.80px;color:#f2f2f2;font-size:15px;">ethod</div>
<div class="a" style="left:729px;top:861px;width:567px;height:84px;border:1px solid #aaa99c;border-radius:3px"></div>
<div class="a" style="left:736px;top:855px;width:92px;height:11px;background:#49484e"></div>
<div class="t" style="left:739.27px;top:852.30px;color:#ffffff;font-size:15px;letter-spacing:-0.064px;">Device name</div>
<div class="t" style="left:739.32px;top:874.70px;color:#f2f2f2;font-size:15px;letter-spacing:-0.061px;">Set a name for the master.</div>
<div class="a" style="left:885px;top:200px;width:5px;height:657px;background:#000;border-radius:0 4px 4px 0"></div>
<div class="a" style="left:470px;top:855px;width:420px;height:2px;background:#000;border-radius:0 0 4px 4px"></div>
<div class="a" style="left:468px;top:198px;width:419px;height:658px;background:#6f7076;border-radius:1px 4px 4px 4px;border-left:1px solid #a6a6a8;border-top:1px solid #9a9a9c;border-right:1px solid #9c9c9e;border-bottom:1px solid #8a8a8c"></div>
<div class="a" style="left:470px;top:697px;width:415px;height:22px;background:linear-gradient(#e2e2e2 0%,#dcdcdc 40%,#c6c6c6 70%,#d4d4d4 90%,#dadada 100%)"></div>
<div class="a" style="left:470px;top:697px;width:12px;height:22px;background:linear-gradient(90deg,#a8a8aa,rgba(200,200,200,0))"></div>
<div class="a" style="left:506px;top:302px;width:380px;height:2px;background:#aeaeb2"></div>
<div class="a" style="left:506px;top:360px;width:380px;height:2px;background:#aeaeb2"></div>
<div class="a" style="left:506px;top:418px;width:380px;height:2px;background:#aeaeb2"></div>
<div class="a" style="left:506px;top:449px;width:380px;height:2px;background:#aeaeb2"></div>
<div class="a" style="left:506px;top:507px;width:380px;height:2px;background:#aeaeb2"></div>
<div class="a" style="left:506px;top:589px;width:380px;height:2px;background:#aeaeb2"></div>
<div class="a" style="left:506px;top:723px;width:380px;height:2px;background:#aeaeb2"></div>
<div class="t" style="left:490.54px;top:203.30px;color:#a2a2a6;font-size:15px;letter-spacing:-0.035px;">Cut</div>
<div class="t" style="left:490.54px;top:228.30px;color:#a2a2a6;font-size:15px;letter-spacing:0.058px;">Copy</div>
<div class="t" style="left:490.07px;top:254.30px;color:#a2a2a6;font-size:15px;letter-spacing:-0.365px;">Paste</div>
<div class="t" style="left:490.07px;top:279.30px;color:#a2a2a6;font-size:15px;letter-spacing:0.248px;">Delete</div>
<div class="t" style="left:490.14px;top:311.30px;color:#a2a2a6;font-size:15px;letter-spacing:0.776px;">Undo</div>
<div class="t" style="left:490.07px;top:336.30px;color:#a2a2a6;font-size:15px;letter-spacing:0.000px;">Redo</div>
<div class="t" style="left:490.07px;top:368.30px;color:#a2a2a6;font-size:15px;letter-spacing:-0.075px;">Expand All</div>
<div class="t" style="left:490.54px;top:393.90px;color:#a2a2a6;font-size:15px;letter-spacing:-0.094px;">Collapse All</div>
<div class="t" style="left:490.54px;top:425.30px;color:#f4f4f4;font-size:15px;letter-spacing:-0.165px;">Calculate Transmission Delay Time of the Master</div>
<div class="t" style="left:489.92px;top:456.90px;color:#f4f4f4;font-size:15px;letter-spacing:-0.094px;">Import Slave Settings and Insert New Slave</div>
<div class="t" style="left:490.07px;top:483.00px;color:#a2a2a6;font-size:15px;letter-spacing:-0.182px;">Export Slave Settings</div>
<div class="t" style="left:491.23px;top:514.40px;color:#a2a2a6;font-size:15px;letter-spacing:-0.143px;">Write Slave Node Address</div>
<div class="t" style="left:490.54px;top:540.50px;color:#a2a2a6;font-size:15px;letter-spacing:0.098px;">Compare and Merge with Actual Network Configuration</div>
<div class="t" style="left:490.55px;top:565.60px;color:#a2a2a6;font-size:15px;letter-spacing:-0.244px;">Get Slave Serial Numbers</div>
<div class="t" style="left:490.54px;top:597.00px;color:#f4f4f4;font-size:15px;letter-spacing:-0.103px;">Clear All Settings</div>
<div class="t" style="left:490.07px;top:623.80px;color:#a2a2a6;font-size:15px;letter-spacing:0.015px;">Display Diagnosis/Statistics Information</div>
<div class="t" style="left:490.07px;top:648.70px;color:#a2a2a6;font-size:15px;letter-spacing:0.153px;">Display Production Information</div>
<div class="t" style="left:490.07px;top:674.30px;color:#a2a2a6;font-size:15px;letter-spacing:0.028px;">Display Packet Monitor</div>
<div class="t" style="left:490.07px;top:699.60px;color:#1e1e1e;font-size:15px;letter-spacing:-0.316px;">Display ESI Library</div>
<div class="t" style="left:490.07px;top:731.30px;color:#f4f4f4;font-size:15px;letter-spacing:0.189px;">Export Configuration Information</div>
<div class="t" style="left:490.59px;top:756.30px;color:#f4f4f4;font-size:15px;letter-spacing:-0.069px;">Output to ENS File</div>
<div class="t" style="left:490.07px;top:781.90px;color:#f4f4f4;font-size:15px;letter-spacing:0.038px;">Export All Couplers' I/O Allocations</div>
<div class="t" style="left:491.27px;top:807.10px;color:#f4f4f4;font-size:15px;letter-spacing:-0.231px;">Assign Drives to Axes</div>
<div class="t" style="left:490.62px;top:833.30px;color:#f4f4f4;font-size:15px;letter-spacing:-0.260px;">Safety Related PDOs Batch Setting</div>
<svg class="a" style="left:673px;top:709px;" width="14" height="22" viewBox="0 0 14 22"><path d="M1 1 L1 17 L4.8 13.3 L7.6 20 L10 19 L7.3 12.5 L12.5 12.5 Z" fill="#fff" stroke="#000" stroke-width="1" stroke-linejoin="round"/></svg>
<div class="a" style="left:1316px;top:130px;width:248px;height:27px;background:linear-gradient(#5c5c60 0px,#505054 5px,#3a3b3e 12px,#2a2c2f 17px,#222426 27px)"></div>
<div class="a" style="left:1382px;top:139px;width:135px;height:11px;background-image:radial-gradient(circle at 1.5px 1.5px,#8e8e8e 0.75px,transparent 1.05px),radial-gradient(circle at 4px 5px,#7e7e7e 0.75px,transparent 1.05px);background-size:5px 7px"></div>
<div class="t" style="left:1320.66px;top:136.60px;color:#ffffff;font-size:15px;letter-spacing:0.022px;">Toolbox</div>
<svg class="a" style="left:1527px;top:144px;" width="11" height="6" viewBox="0 0 11 6"><path d="M0 0 H10 L5 6 Z" fill="#f0f0f0"/></svg>
<svg class="a" style="left:1546px;top:136px;" width="12" height="16" viewBox="0 0 12 16"><path d="M3 1 H9 M2 9 H10 M6 9 V15" stroke="#f4f4f4" stroke-width="1.6" fill="none"/><rect x="4" y="1" width="4" height="8" fill="none" stroke="#f4f4f4" stroke-width="1.2"/></svg>
<div class="a" style="left:1316px;top:157px;width:248px;height:804px;background:#49484e;border-left:1px solid #5a5a5e;border-right:1px solid #b4b4b6;border-bottom:1px solid #5a5a5e"></div>
<div class="a" style="left:1318px;top:158px;width:245px;height:20px;background:#707075;border:1px solid #a6a6a8"></div>
<div class="a" style="left:1319px;top:159px;width:1px;height:18px;background:#111"></div>
<div class="a" style="left:1536px;top:159px;width:26px;height:18px;background:linear-gradient(#60626a,#44464e);border-left:1px solid #101010"></div>
<svg class="a" style="left:1544px;top:164px;" width="10" height="7" viewBox="0 0 10 7"><path d="M0 0 H10 L5 7 Z" fill="#f4f4f4"/></svg>
<div class="t" style="left:1321.97px;top:157.80px;color:#ffffff;font-size:15px;letter-spacing:-0.063px;">All vendors</div>
<div class="a" style="left:1318px;top:181px;width:244px;height:20px;background:#3c3c42;border:1px solid #f0f0f0"></div>
<div class="t" style="left:1318.75px;top:184.30px;color:#ffffff;font-size:15px;letter-spacing:-0.179px;">Groups</div>
<div class="a" style="left:1319px;top:203px;width:242px;height:152px;background:#2c2c30;border:1px solid #18181a"></div>
<svg class="a" style="left:1321px;top:205px;" width="216" height="148" viewBox="0 0 216 148"></svg>
<div class="a" style="left:1321px;top:205px;width:216px;height:147px;overflow:hidden">
<div class="a" style="left:0;top:0px;width:216px;height:20px;background:#6db3ef"></div>
<div class="t" style="left:9.57px;top:2.80px;color:#101018;font-size:15px;letter-spacing:0.097px;">All groups</div>
<div class="a" style="left:0;top:20px;width:216px;height:20px;background:#5c5b61"></div>
<div class="a" style="left:5px;top:21px;width:18px;height:18px;background:#fff;border:1px solid #111"></div>
<svg class="a" style="left:6px;top:22px" width="16" height="16" viewBox="0 0 17 17"><rect x="4" y="1.5" width="9" height="13" fill="#151515"/><rect x="4" y="1.5" width="4" height="3" fill="#444"/><circle cx="6" cy="7" r="0.8" fill="#e0d020"/><circle cx="6" cy="9" r="0.8" fill="#e0d020"/><circle cx="6" cy="11" r="0.8" fill="#e0d020"/><circle cx="6" cy="13" r="0.8" fill="#e0d020"/><path d="M9 7 H12 M9 9 H12 M9 11 H12" stroke="#555" stroke-width="0.8"/></svg>
<div class="t" style="left:26.96px;top:23.10px;color:#f2f2f2;font-size:15px;letter-spacing:-0.217px;">Terminal Coupler</div>
<div class="a" style="left:0;top:40px;width:216px;height:20px;background:#4c4b51"></div>
<div class="a" style="left:5px;top:41px;width:18px;height:18px;background:#fff;border:1px solid #111"></div>
<svg class="a" style="left:6px;top:42px" width="16" height="16" viewBox="0 0 17 17"><rect x="5" y="1" width="7" height="14" fill="#151515"/><rect x="5" y="1.5" width="3" height="1.5" fill="#d02020"/><path d="M9 4 H12 M9 6 H12 M9 8 H12 M9 10 H12 M9 12 H12" stroke="#555" stroke-width="0.7"/></svg>
<div class="t" style="left:26.62px;top:43.10px;color:#f2f2f2;font-size:15px;letter-spacing:-0.357px;">Servo Drives</div>
<div class="a" style="left:0;top:60px;width:216px;height:20px;background:#5c5b61"></div>
<div class="a" style="left:5px;top:61px;width:18px;height:18px;background:#fff;border:1px solid #111"></div>
<svg class="a" style="left:6px;top:62px" width="16" height="16" viewBox="0 0 17 17"><path d="M3 6 L9 2 L14 5 L13 11 L7 15 L3 12 Z" fill="#222"/><path d="M4 12 L7 14" stroke="#666"/></svg>
<div class="t" style="left:25.92px;top:63.10px;color:#f2f2f2;font-size:15px;letter-spacing:0.254px;">Integrated Motors</div>
<div class="a" style="left:0;top:80px;width:216px;height:20px;background:#4c4b51"></div>
<div class="a" style="left:5px;top:81px;width:18px;height:18px;background:#fff;border:1px solid #111"></div>
<svg class="a" style="left:6px;top:82px" width="16" height="16" viewBox="0 0 17 17"><path d="M3 5 Q4 2 9 2 Q14 2 14 6 L14 13 Q12 15 8 15 Q3 15 3 12 Z" fill="#2a2a2a"/><rect x="6" y="8" width="3" height="3" fill="#3a8ad0"/><rect x="9" y="8" width="2" height="3" fill="#40c040"/></svg>
<div class="t" style="left:26.07px;top:83.10px;color:#f2f2f2;font-size:15px;letter-spacing:-0.101px;">Frequency Inverter</div>
<div class="a" style="left:0;top:100px;width:216px;height:20px;background:#5c5b61"></div>
<div class="a" style="left:5px;top:101px;width:18px;height:18px;background:#fff;border:1px solid #111"></div>
<svg class="a" style="left:6px;top:102px" width="16" height="16" viewBox="0 0 17 17"><rect x="1" y="7" width="15" height="5" fill="#151515"/><rect x="3" y="6" width="13" height="1.2" fill="#e8e020"/><path d="M4 12 L5 10 L6 12 L7 10 L8 12 L9 10 L10 12 L11 10 L12 12 L13 10 L14 12" stroke="#777" stroke-width="0.6" fill="none"/><rect x="1" y="8" width="2" height="2" fill="#fff"/></svg>
<div class="t" style="left:26.07px;top:103.10px;color:#f2f2f2;font-size:15px;letter-spacing:0.163px;">Digital IO</div>
<div class="a" style="left:0;top:120px;width:216px;height:20px;background:#4c4b51"></div>
<div class="a" style="left:5px;top:121px;width:18px;height:18px;background:#fff;border:1px solid #111"></div>
<svg class="a" style="left:6px;top:122px" width="16" height="16" viewBox="0 0 17 17"><rect x="1" y="7" width="15" height="5" fill="#151515"/><rect x="3" y="6" width="13" height="1.2" fill="#e8e020"/><path d="M4 12 L5 10 L6 12 L7 10 L8 12 L9 10 L10 12 L11 10 L12 12 L13 10 L14 12" stroke="#777" stroke-width="0.6" fill="none"/><rect x="1" y="8" width="2" height="2" fill="#fff"/></svg>
<div class="t" style="left:27.27px;top:123.10px;color:#f2f2f2;font-size:15px;letter-spacing:-0.070px;">Analog IO</div>
<div class="a" style="left:0;top:140px;width:216px;height:20px;background:#5c5b61"></div>
<div class="a" style="left:5px;top:141px;width:18px;height:18px;background:#fff;border:1px solid #111"></div>
<svg class="a" style="left:6px;top:142px" width="16" height="16" viewBox="0 0 17 17"></svg>
<div class="t" style="left:26.07px;top:143.10px;color:#f2f2f2;font-size:15px;letter-spacing:-0.172px;">Encoder Input</div>
</div>
<div class="a" style="left:1537px;top:205px;width:22px;height:148px;background:#2e2e32"></div>
<div class="a" style="left:1538px;top:206px;width:19px;height:19px;background:#2a2a2e;border-bottom:1px solid #3a3a3e"></div>
<svg class="a" style="left:1541px;top:210px;" width="12" height="8" viewBox="0 0 12 8"><path d="M1 7 L6 2 L11 7" stroke="#4c4c50" stroke-width="1.3" fill="none"/></svg>
<div class="a" style="left:1543px;top:228px;width:9px;height:42px;background:#717171"></div>
<div class="a" style="left:1538px;top:333px;width:19px;height:19px;background:#2a2a2e;border-top:1px solid #3a3a3e"></div>
<svg class="a" style="left:1541px;top:338px;" width="12" height="8" viewBox="0 0 12 8"><path d="M1 1 L6 6 L11 1" stroke="#4c4c50" stroke-width="1.3" fill="none"/></svg>
<div class="a" style="left:1317px;top:356px;width:246px;height:6px;background:#3c3b41"></div>
<div class="a" style="left:1318px;top:365px;width:244px;height:25px;background:#e3e3e5;border-right:1px solid #fff;border-top:1px solid #fff;border-left:1px solid #bbb"></div>
<div class="t" style="left:1320.41px;top:367.00px;color:#1a1a1a;font-size:15px;letter-spacing:-0.224px;font-style:italic;">Input Keyword</div>
<div class="a" style="left:1431px;top:393px;width:14px;height:14px;background:#dcdcdc"></div>
<div class="t" style="left:1449.32px;top:393.30px;color:#f4f4f4;font-size:15px;letter-spacing:-0.187px;">Show all versions</div>
<div class="a" style="left:1319px;top:413px;width:242px;height:396px;background:#49484e;border:1px solid #18181a"></div>
<div class="a" style="left:1321px;top:415px;width:217px;height:393px;overflow:hidden">
<div class="a" style="left:0;top:0px;width:217px;height:40px;background:#6db3ef"></div>
<div class="a" style="left:6px;top:5px;width:30px;height:30px;background:#fff;border:1px solid #111"></div>
<div class="a" style="left:12px;top:8px;width:16px;height:24px;background:#1a1a1a"></div>
<div class="a" style="left:12px;top:8px;width:8px;height:7px;background:#3a3a3a"></div>
<div class="a" style="left:14px;top:17px;width:3px;height:3px;background:#e8e020;border-radius:50%"></div>
<div class="a" style="left:20px;top:17px;width:6px;height:2px;background:#555"></div>
<div class="a" style="left:14px;top:20px;width:3px;height:3px;background:#e8e020;border-radius:50%"></div>
<div class="a" style="left:20px;top:20px;width:6px;height:2px;background:#555"></div>
<div class="a" style="left:14px;top:24px;width:3px;height:3px;background:#e8e020;border-radius:50%"></div>
<div class="a" style="left:20px;top:24px;width:6px;height:2px;background:#555"></div>
<div class="a" style="left:14px;top:27px;width:3px;height:3px;background:#e8e020;border-radius:50%"></div>
<div class="a" style="left:20px;top:27px;width:6px;height:2px;background:#555"></div>
<div class="t" style="left:42.35px;top:4.85px;color:#101018;font-size:14px;letter-spacing:-0.8px">NX-ECC201 Rev:1.2</div>
<div class="t" style="left:48.72px;top:22.44px;color:#9c9ca0;font-size:12px;letter-spacing:-0.15px">NX-ECC201 EtherCAT coupler V</div>
<div class="a" style="left:0;top:40px;width:217px;height:40px;background:#5c5b61"></div>
<div class="a" style="left:6px;top:45px;width:30px;height:30px;background:#fff;border:1px solid #111"></div>
<div class="a" style="left:12px;top:48px;width:16px;height:24px;background:#1a1a1a"></div>
<div class="a" style="left:12px;top:48px;width:8px;height:7px;background:#3a3a3a"></div>
<div class="a" style="left:14px;top:57px;width:3px;height:3px;background:#e8e020;border-radius:50%"></div>
<div class="a" style="left:20px;top:57px;width:6px;height:2px;background:#555"></div>
<div class="a" style="left:14px;top:60px;width:3px;height:3px;background:#e8e020;border-radius:50%"></div>
<div class="a" style="left:20px;top:60px;width:6px;height:2px;background:#555"></div>
<div class="a" style="left:14px;top:64px;width:3px;height:3px;background:#e8e020;border-radius:50%"></div>
<div class="a" style="left:20px;top:64px;width:6px;height:2px;background:#555"></div>
<div class="a" style="left:14px;top:67px;width:3px;height:3px;background:#e8e020;border-radius:50%"></div>
<div class="a" style="left:20px;top:67px;width:6px;height:2px;background:#555"></div>
<div class="t" style="left:42.35px;top:44.85px;color:#f4f4f4;font-size:14px;letter-spacing:-0.8px">NX-ECC202 Rev:1.2</div>
<div class="t" style="left:48.72px;top:62.44px;color:#a4a4a6;font-size:12px;letter-spacing:-0.15px">NX-ECC202 EtherCAT coupler V</div>
<div class="a" style="left:0;top:80px;width:217px;height:40px;background:#4c4b51"></div>
<div class="a" style="left:6px;top:85px;width:30px;height:30px;background:#fff;border:1px solid #111"></div>
<div class="a" style="left:12px;top:88px;width:16px;height:24px;background:#1a1a1a"></div>
<div class="a" style="left:12px;top:88px;width:8px;height:7px;background:#3a3a3a"></div>
<div class="a" style="left:14px;top:97px;width:3px;height:3px;background:#e8e020;border-radius:50%"></div>
<div class="a" style="left:20px;top:97px;width:6px;height:2px;background:#555"></div>
<div class="a" style="left:14px;top:100px;width:3px;height:3px;background:#e8e020;border-radius:50%"></div>
<div class="a" style="left:20px;top:100px;width:6px;height:2px;background:#555"></div>
<div class="a" style="left:14px;top:104px;width:3px;height:3px;background:#e8e020;border-radius:50%"></div>
<div class="a" style="left:20px;top:104px;width:6px;height:2px;background:#555"></div>
<div class="a" style="left:14px;top:107px;width:3px;height:3px;background:#e8e020;border-radius:50%"></div>
<div class="a" style="left:20px;top:107px;width:6px;height:2px;background:#555"></div>
<div class="t" style="left:42.35px;top:84.85px;color:#f4f4f4;font-size:14px;letter-spacing:-0.8px">NX-ECC203 Rev:1.7</div>
<div class="t" style="left:48.72px;top:102.44px;color:#a4a4a6;font-size:12px;letter-spacing:-0.15px">NX-ECC203 EtherCAT coupler V</div>
<div class="a" style="left:0;top:120px;width:217px;height:40px;background:#5c5b61"></div>
<div class="a" style="left:6px;top:125px;width:30px;height:30px;background:#fff;border:1px solid #111"></div>
<svg class="a" style="left:13px;top:128px" width="14" height="25" viewBox="0 0 14 25"><path d="M0.5 2 Q1 0.5 3 0.5 H12.5 V24.5 H0.5 Z" fill="#060606"/><rect x="0.5" y="3" width="4" height="3" fill="#8a0a0a"/><rect x="4.5" y="3.5" width="3" height="2" fill="#707070"/><rect x="4" y="7.5" width="3" height="8" fill="#bdbdbd"/><rect x="5" y="17" width="2.5" height="6" fill="#8a8a8a"/><rect x="7.5" y="1" width="1" height="23" fill="#fff" opacity="0.9"/><path d="M12.5 2.5 h1 M12.5 5.5 h1 M12.5 8.5 h1 M12.5 11.5 h1 M12.5 14.5 h1 M12.5 17.5 h1 M12.5 20.5 h1" stroke="#fff" stroke-width="1.2"/><path d="M9 3 h3 M9 6 h3 M9 9 h3 M9 12 h3 M9 15 h3 M9 18 h3 M9 21 h3" stroke="#3a3a3a" stroke-width="0.8"/></svg>
<div class="t" style="left:42.35px;top:124.85px;color:#f4f4f4;font-size:14px;letter-spacing:-0.66px">R88D-1SAN02H-ECT Rev:1.0</div>
<div class="t" style="left:48.72px;top:142.44px;color:#a4a4a6;font-size:12px;letter-spacing:-0.22px">R88D-1SAN02H-ECT 200V/200W</div>
<div class="a" style="left:0;top:160px;width:217px;height:40px;background:#4c4b51"></div>
<div class="a" style="left:6px;top:165px;width:30px;height:30px;background:#fff;border:1px solid #111"></div>
<svg class="a" style="left:13px;top:168px" width="14" height="25" viewBox="0 0 14 25"><path d="M0.5 2 Q1 0.5 3 0.5 H12.5 V24.5 H0.5 Z" fill="#060606"/><rect x="0.5" y="3" width="4" height="3" fill="#8a0a0a"/><rect x="4.5" y="3.5" width="3" height="2" fill="#707070"/><rect x="4" y="7.5" width="3" height="8" fill="#bdbdbd"/><rect x="5" y="17" width="2.5" height="6" fill="#8a8a8a"/><rect x="7.5" y="1" width="1" height="23" fill="#fff" opacity="0.9"/><path d="M12.5 2.5 h1 M12.5 5.5 h1 M12.5 8.5 h1 M12.5 11.5 h1 M12.5 14.5 h1 M12.5 17.5 h1 M12.5 20.5 h1" stroke="#fff" stroke-width="1.2"/><path d="M9 3 h3 M9 6 h3 M9 9 h3 M9 12 h3 M9 15 h3 M9 18 h3 M9 21 h3" stroke="#3a3a3a" stroke-width="0.8"/></svg>
<div class="t" style="left:42.35px;top:164.85px;color:#f4f4f4;font-size:14px;letter-spacing:-0.66px">R88D-1SAN04H-ECT Rev:1.0</div>
<div class="t" style="left:48.72px;top:182.44px;color:#a4a4a6;font-size:12px;letter-spacing:-0.22px">R88D-1SAN04H-ECT 200V/400W</div>
<div class="a" style="left:0;top:200px;width:217px;height:40px;background:#5c5b61"></div>
<div class="a" style="left:6px;top:205px;width:30px;height:30px;background:#fff;border:1px solid #111"></div>
<svg class="a" style="left:13px;top:208px" width="14" height="25" viewBox="0 0 14 25"><path d="M0.5 2 Q1 0.5 3 0.5 H12.5 V24.5 H0.5 Z" fill="#060606"/><rect x="0.5" y="3" width="4" height="3" fill="#8a0a0a"/><rect x="4.5" y="3.5" width="3" height="2" fill="#707070"/><rect x="4" y="7.5" width="3" height="8" fill="#bdbdbd"/><rect x="5" y="17" width="2.5" height="6" fill="#8a8a8a"/><rect x="7.5" y="1" width="1" height="23" fill="#fff" opacity="0.9"/><path d="M12.5 2.5 h1 M12.5 5.5 h1 M12.5 8.5 h1 M12.5 11.5 h1 M12.5 14.5 h1 M12.5 17.5 h1 M12.5 20.5 h1" stroke="#fff" stroke-width="1.2"/><path d="M9 3 h3 M9 6 h3 M9 9 h3 M9 12 h3 M9 15 h3 M9 18 h3 M9 21 h3" stroke="#3a3a3a" stroke-width="0.8"/></svg>
<div class="t" style="left:42.35px;top:204.85px;color:#f4f4f4;font-size:14px;letter-spacing:-0.66px">R88D-1SAN08H-ECT Rev:1.0</div>
<div class="t" style="left:48.72px;top:222.44px;color:#a4a4a6;font-size:12px;letter-spacing:-0.22px">R88D-1SAN08H-ECT 200V/750W</div>
<div class="a" style="left:0;top:240px;width:217px;height:40px;background:#4c4b51"></div>
<div class="a" style="left:6px;top:245px;width:30px;height:30px;background:#fff;border:1px solid #111"></div>
<svg class="a" style="left:13px;top:248px" width="14" height="25" viewBox="0 0 14 25"><path d="M0.5 2 Q1 0.5 3 0.5 H12.5 V24.5 H0.5 Z" fill="#060606"/><rect x="0.5" y="3" width="4" height="3" fill="#8a0a0a"/><rect x="4.5" y="3.5" width="3" height="2" fill="#707070"/><rect x="4" y="7.5" width="3" height="8" fill="#bdbdbd"/><rect x="5" y="17" width="2.5" height="6" fill="#8a8a8a"/><rect x="7.5" y="1" width="1" height="23" fill="#fff" opacity="0.9"/><path d="M12.5 2.5 h1 M12.5 5.5 h1 M12.5 8.5 h1 M12.5 11.5 h1 M12.5 14.5 h1 M12.5 17.5 h1 M12.5 20.5 h1" stroke="#fff" stroke-width="1.2"/><path d="M9 3 h3 M9 6 h3 M9 9 h3 M9 12 h3 M9 15 h3 M9 18 h3 M9 21 h3" stroke="#3a3a3a" stroke-width="0.8"/></svg>
<div class="t" style="left:42.35px;top:244.85px;color:#f4f4f4;font-size:14px;letter-spacing:-0.66px">R88D-1SAN10F-ECT Rev:1.0</div>
<div class="t" style="left:48.72px;top:262.44px;color:#a4a4a6;font-size:12px;letter-spacing:-0.22px">R88D-1SAN10F-ECT 400V/1kW</div>
<div class="a" style="left:0;top:280px;width:217px;height:40px;background:#5c5b61"></div>
<div class="a" style="left:6px;top:285px;width:30px;height:30px;background:#fff;border:1px solid #111"></div>
<svg class="a" style="left:13px;top:288px" width="14" height="25" viewBox="0 0 14 25"><path d="M0.5 2 Q1 0.5 3 0.5 H12.5 V24.5 H0.5 Z" fill="#060606"/><rect x="0.5" y="3" width="4" height="3" fill="#8a0a0a"/><rect x="4.5" y="3.5" width="3" height="2" fill="#707070"/><rect x="4" y="7.5" width="3" height="8" fill="#bdbdbd"/><rect x="5" y="17" width="2.5" height="6" fill="#8a8a8a"/><rect x="7.5" y="1" width="1" height="23" fill="#fff" opacity="0.9"/><path d="M12.5 2.5 h1 M12.5 5.5 h1 M12.5 8.5 h1 M12.5 11.5 h1 M12.5 14.5 h1 M12.5 17.5 h1 M12.5 20.5 h1" stroke="#fff" stroke-width="1.2"/><path d="M9 3 h3 M9 6 h3 M9 9 h3 M9 12 h3 M9 15 h3 M9 18 h3 M9 21 h3" stroke="#3a3a3a" stroke-width="0.8"/></svg>
<div class="t" style="left:42.35px;top:284.85px;color:#f4f4f4;font-size:14px;letter-spacing:-0.66px">R88D-1SAN10H-ECT Rev:1.0</div>
<div class="t" style="left:48.72px;top:302.44px;color:#a4a4a6;font-size:12px;letter-spacing:-0.22px">R88D-1SAN10H-ECT 200V/1kW</div>
<div class="a" style="left:0;top:320px;width:217px;height:40px;background:#4c4b51"></div>
<div class="a" style="left:6px;top:325px;width:30px;height:30px;background:#fff;border:1px solid #111"></div>
<svg class="a" style="left:13px;top:328px" width="14" height="25" viewBox="0 0 14 25"><path d="M0.5 2 Q1 0.5 3 0.5 H12.5 V24.5 H0.5 Z" fill="#060606"/><rect x="0.5" y="3" width="4" height="3" fill="#8a0a0a"/><rect x="4.5" y="3.5" width="3" height="2" fill="#707070"/><rect x="4" y="7.5" width="3" height="8" fill="#bdbdbd"/><rect x="5" y="17" width="2.5" height="6" fill="#8a8a8a"/><rect x="7.5" y="1" width="1" height="23" fill="#fff" opacity="0.9"/><path d="M12.5 2.5 h1 M12.5 5.5 h1 M12.5 8.5 h1 M12.5 11.5 h1 M12.5 14.5 h1 M12.5 17.5 h1 M12.5 20.5 h1" stroke="#fff" stroke-width="1.2"/><path d="M9 3 h3 M9 6 h3 M9 9 h3 M9 12 h3 M9 15 h3 M9 18 h3 M9 21 h3" stroke="#3a3a3a" stroke-width="0.8"/></svg>
<div class="t" style="left:42.35px;top:324.85px;color:#f4f4f4;font-size:14px;letter-spacing:-0.66px">R88D-1SAN15F-ECT Rev:1.0</div>
<div class="t" style="left:48.72px;top:342.44px;color:#a4a4a6;font-size:12px;letter-spacing:-0.22px">R88D-1SAN15F-ECT 400V/1.5kW</div>
<div class="a" style="left:0;top:360px;width:217px;height:40px;background:#5c5b61"></div>
<div class="a" style="left:6px;top:365px;width:30px;height:30px;background:#fff;border:1px solid #111"></div>
<svg class="a" style="left:13px;top:368px" width="14" height="25" viewBox="0 0 14 25"><path d="M0.5 2 Q1 0.5 3 0.5 H12.5 V24.5 H0.5 Z" fill="#060606"/><rect x="0.5" y="3" width="4" height="3" fill="#8a0a0a"/><rect x="4.5" y="3.5" width="3" height="2" fill="#707070"/><rect x="4" y="7.5" width="3" height="8" fill="#bdbdbd"/><rect x="5" y="17" width="2.5" height="6" fill="#8a8a8a"/><rect x="7.5" y="1" width="1" height="23" fill="#fff" opacity="0.9"/><path d="M12.5 2.5 h1 M12.5 5.5 h1 M12.5 8.5 h1 M12.5 11.5 h1 M12.5 14.5 h1 M12.5 17.5 h1 M12.5 20.5 h1" stroke="#fff" stroke-width="1.2"/><path d="M9 3 h3 M9 6 h3 M9 9 h3 M9 12 h3 M9 15 h3 M9 18 h3 M9 21 h3" stroke="#3a3a3a" stroke-width="0.8"/></svg>
<div class="t" style="left:42.35px;top:364.85px;color:#f4f4f4;font-size:14px;letter-spacing:-0.66px">R88D-1SAN15H-ECT Rev:1.0</div>
<div class="t" style="left:48.72px;top:382.44px;color:#a4a4a6;font-size:12px;letter-spacing:-0.22px">R88D-1SAN15H-ECT 200V/1.5kW</div>
</div>
<div class="a" style="left:1538px;top:415px;width:21px;height:393px;background:#2e2e32"></div>
<div class="a" style="left:1539px;top:416px;width:19px;height:19px;background:#2a2a2e;border-bottom:1px solid #3a3a3e"></div>
<svg class="a" style="left:1542px;top:421px;" width="12" height="8" viewBox="0 0 12 8"><path d="M1 7 L6 2 L11 7" stroke="#4c4c50" stroke-width="1.3" fill="none"/></svg>
<div class="a" style="left:1544px;top:437px;width:9px;height:12px;background:#717171"></div>
<div class="a" style="left:1539px;top:786px;width:19px;height:20px;background:#2a2a2e;border-top:1px solid #3a3a3e"></div>
<svg class="a" style="left:1542px;top:792px;" width="12" height="8" viewBox="0 0 12 8"><path d="M1 1 L6 6 L11 1" stroke="#4c4c50" stroke-width="1.3" fill="none"/></svg>
<div class="a" style="left:1317px;top:813px;width:246px;height:5px;background:#3c3b41"></div>
<div class="a" style="left:1318px;top:819px;width:243px;height:139px;background:#49484e;border:1px solid #111"></div>
<svg class="a" style="left:1343px;top:852px;" width="16" height="32" viewBox="0 0 16 32"><path d="M2.8 0.5 V9.5 H14.5 M2.8 31.5 V21 H14.5" stroke="#f2a400" stroke-width="3.2" stroke-linejoin="round" fill="none"/></svg>
<div class="a" style="left:1357px;top:852.5px;width:29px;height:28.5px;background:#fff;box-shadow:1px 2px 2px rgba(0,0,0,0.55)"></div>
<svg class="a" style="left:1362px;top:854px;" width="17" height="26" viewBox="0 0 17 26"><rect x="0.5" y="0.5" width="16" height="25" rx="1" fill="#080808"/><rect x="1" y="1" width="6" height="6" fill="#3c3c3c"/><rect x="8" y="2" width="8" height="5" fill="#000"/><circle cx="4.7" cy="10" r="1.2" fill="#c8c820"/><circle cx="4.7" cy="13.7" r="1.2" fill="#c8c820"/><circle cx="4.7" cy="17.3" r="1.2" fill="#c8c820"/><circle cx="4.7" cy="21" r="1.2" fill="#c8c820"/><path d="M11 10 h4 M11 14 h4 M11 18 h4 M11 22 h4" stroke="#6a6a6a" stroke-width="1.2"/></svg>
<div class="a" style="left:1319px;top:820px;width:240px;height:137px;overflow:hidden">
<div class="t" style="left:73.57px;top:3.10px;color:#f2f2f2;font-size:15px;letter-spacing:-0.3px">Model name : NX-ECC201 EtherCAT Coupler</div>
<div class="t" style="left:73.57px;top:23.10px;color:#f2f2f2;font-size:15px;letter-spacing:-0.3px">Product name : NX-ECC201</div>
<div class="t" style="left:73.57px;top:43.10px;color:#f2f2f2;font-size:15px;letter-spacing:-0.3px">Revision : 1.2</div>
<div class="t" style="left:74.73px;top:63.10px;color:#f2f2f2;font-size:15px;letter-spacing:-0.3px">Vendor :  OMRON Corporation</div>
<div class="t" style="left:74.04px;top:83.10px;color:#f2f2f2;font-size:15px;letter-spacing:-0.3px">Comment : EtherCAT Coupler</div>
<div class="t" style="left:73.60px;top:102.90px;color:#f2f2f2;font-size:15px;letter-spacing:-0.25px">URL : <span style="color:#12e212;text-decoration:underline">Open on a browser</span></div>
</div>
<div class="a" style="left:1px;top:970px;width:1571px;height:1px;background:#a0a0a0"></div>
<div class="a" style="left:1px;top:971px;width:1571px;height:30px;background:#1f1f21"></div>
</body></html>
